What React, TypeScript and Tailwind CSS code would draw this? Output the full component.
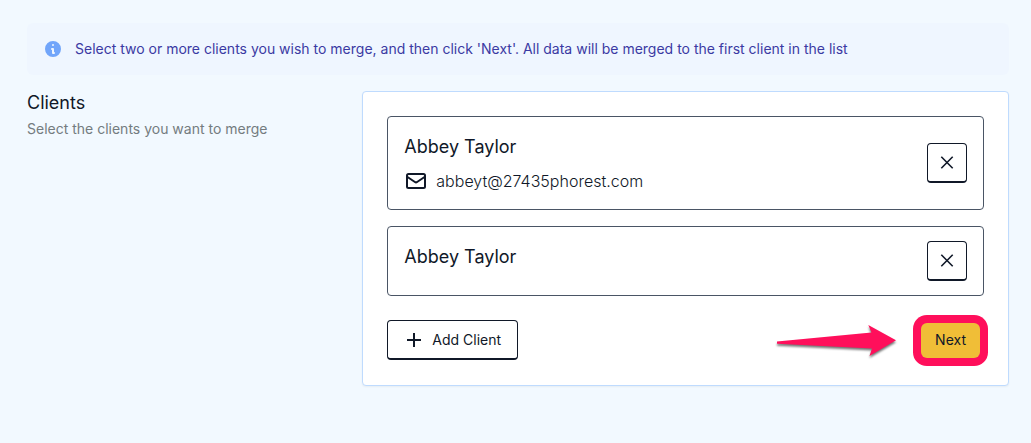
import React from 'react';

interface Client {
  id: number;
  name: string;
  email?: string;
}

const clients: Client[] = [
  { id: 1, name: 'Abbey Taylor', email: 'abbeyt@27435phorest.com' },
  { id: 2, name: 'Abbey Taylor' },
];

function InfoIcon() {
  return (
    <svg className="h-5 w-5 shrink-0 text-[#71a5fa]" viewBox="0 0 20 20" fill="currentColor" aria-hidden="true">
      <path
        fillRule="evenodd"
        clipRule="evenodd"
        d="M18 10a8 8 0 11-16 0 8 8 0 0116 0zm-7-4a1 1 0 11-2 0 1 1 0 012 0zM9 9a1 1 0 000 2v3a1 1 0 001 1h1a1 1 0 100-2v-3a1 1 0 00-1-1H9z"
      />
    </svg>
  );
}

function MailIcon() {
  return (
    <svg className="h-6 w-6 shrink-0" viewBox="0 0 24 24" fill="none" stroke="currentColor" strokeWidth="2" aria-hidden="true">
      <rect x="3" y="5" width="18" height="14" rx="1.5" />
      <path d="M3.5 8l7.4 5a2 2 0 002.2 0l7.4-5" strokeLinecap="round" strokeLinejoin="round" />
    </svg>
  );
}

function CloseIcon() {
  return (
    <svg className="h-5 w-5" viewBox="0 0 20 20" fill="none" stroke="currentColor" strokeWidth="1.6" aria-hidden="true">
      <path d="M4.3 3.8l11.4 11.4M15.7 3.8L4.3 15.2" />
    </svg>
  );
}

function PlusIcon() {
  return (
    <svg className="h-5 w-5" viewBox="0 0 20 20" fill="none" stroke="currentColor" strokeWidth="2" aria-hidden="true">
      <path d="M10 3v14M3 10h14" />
    </svg>
  );
}

function Arrow() {
  return (
    <svg className="h-10 w-[122px] overflow-visible drop-shadow-[0px_2px_1px_rgba(0,0,0,0.55)]" viewBox="0 0 122 40" aria-hidden="true">
      <path fill="#ff0f5b" d="M2 21.5L96.5 12.5 93.3 5 121 20.3 94.5 36 97 28.5 2 23.7z" />
    </svg>
  );
}

function ClientCard({ client }: { client: Client }) {
  return (
    <li className="flex items-center justify-between rounded border border-gray-600 px-4">
      <div className="py-4">
        <h3 className="text-lg leading-7">{client.name}</h3>
        <div className="mt-2">
          {client.email && (
            <p className="flex items-center gap-2 font-light">
              <MailIcon />
              {client.email}
            </p>
          )}
        </div>
      </div>
      <button
        type="button"
        aria-label={`Remove ${client.name}`}
        className="flex h-10 w-10 items-center justify-center rounded border border-b-2 border-gray-900 bg-white"
      >
        <CloseIcon />
      </button>
    </li>
  );
}

export default function App() {
  return (
    <main className="min-h-screen bg-[#f2f9ff] pt-[23px] pr-[22px] pb-14 pl-[27px] font-[Inter,sans-serif] text-gray-900">
      <div className="flex items-center gap-3 rounded-md bg-[#eff6ff] p-4">
        <InfoIcon />
        <p className="text-sm text-[#3b3aa3]">
          Select two or more clients you wish to merge, and then click 'Next'. All data will be merged to the first client in the list
        </p>
      </div>

      <div className="mt-4 grid grid-cols-3 gap-6">
        <div>
          <h2 className="text-lg leading-6">Clients</h2>
          <p className="mt-1 text-sm text-[#747c80]">Select the clients you want to merge</p>
        </div>

        <section className="col-span-2 rounded border border-[#bfdbfe] bg-white px-6 pt-6 pb-[25px] shadow-xs">
          <ul className="flex flex-col gap-4">
            {clients.map((client) => (
              <ClientCard key={client.id} client={client} />
            ))}
          </ul>
          <div className="mt-6 flex items-center">
            <button
              type="button"
              className="flex h-10 items-center gap-2 rounded border border-b-2 border-gray-900 bg-white px-4 text-sm"
            >
              <PlusIcon />
              Add Client
            </button>
            <div className="mr-1 ml-auto flex items-center gap-6">
              <Arrow />
              <button type="button" className="h-[35px] rounded-md bg-[#f0be37] px-[14px] text-sm ring-8 ring-[#ff0f5b]">
                Next
              </button>
            </div>
          </div>
        </section>
      </div>
    </main>
  );
}
